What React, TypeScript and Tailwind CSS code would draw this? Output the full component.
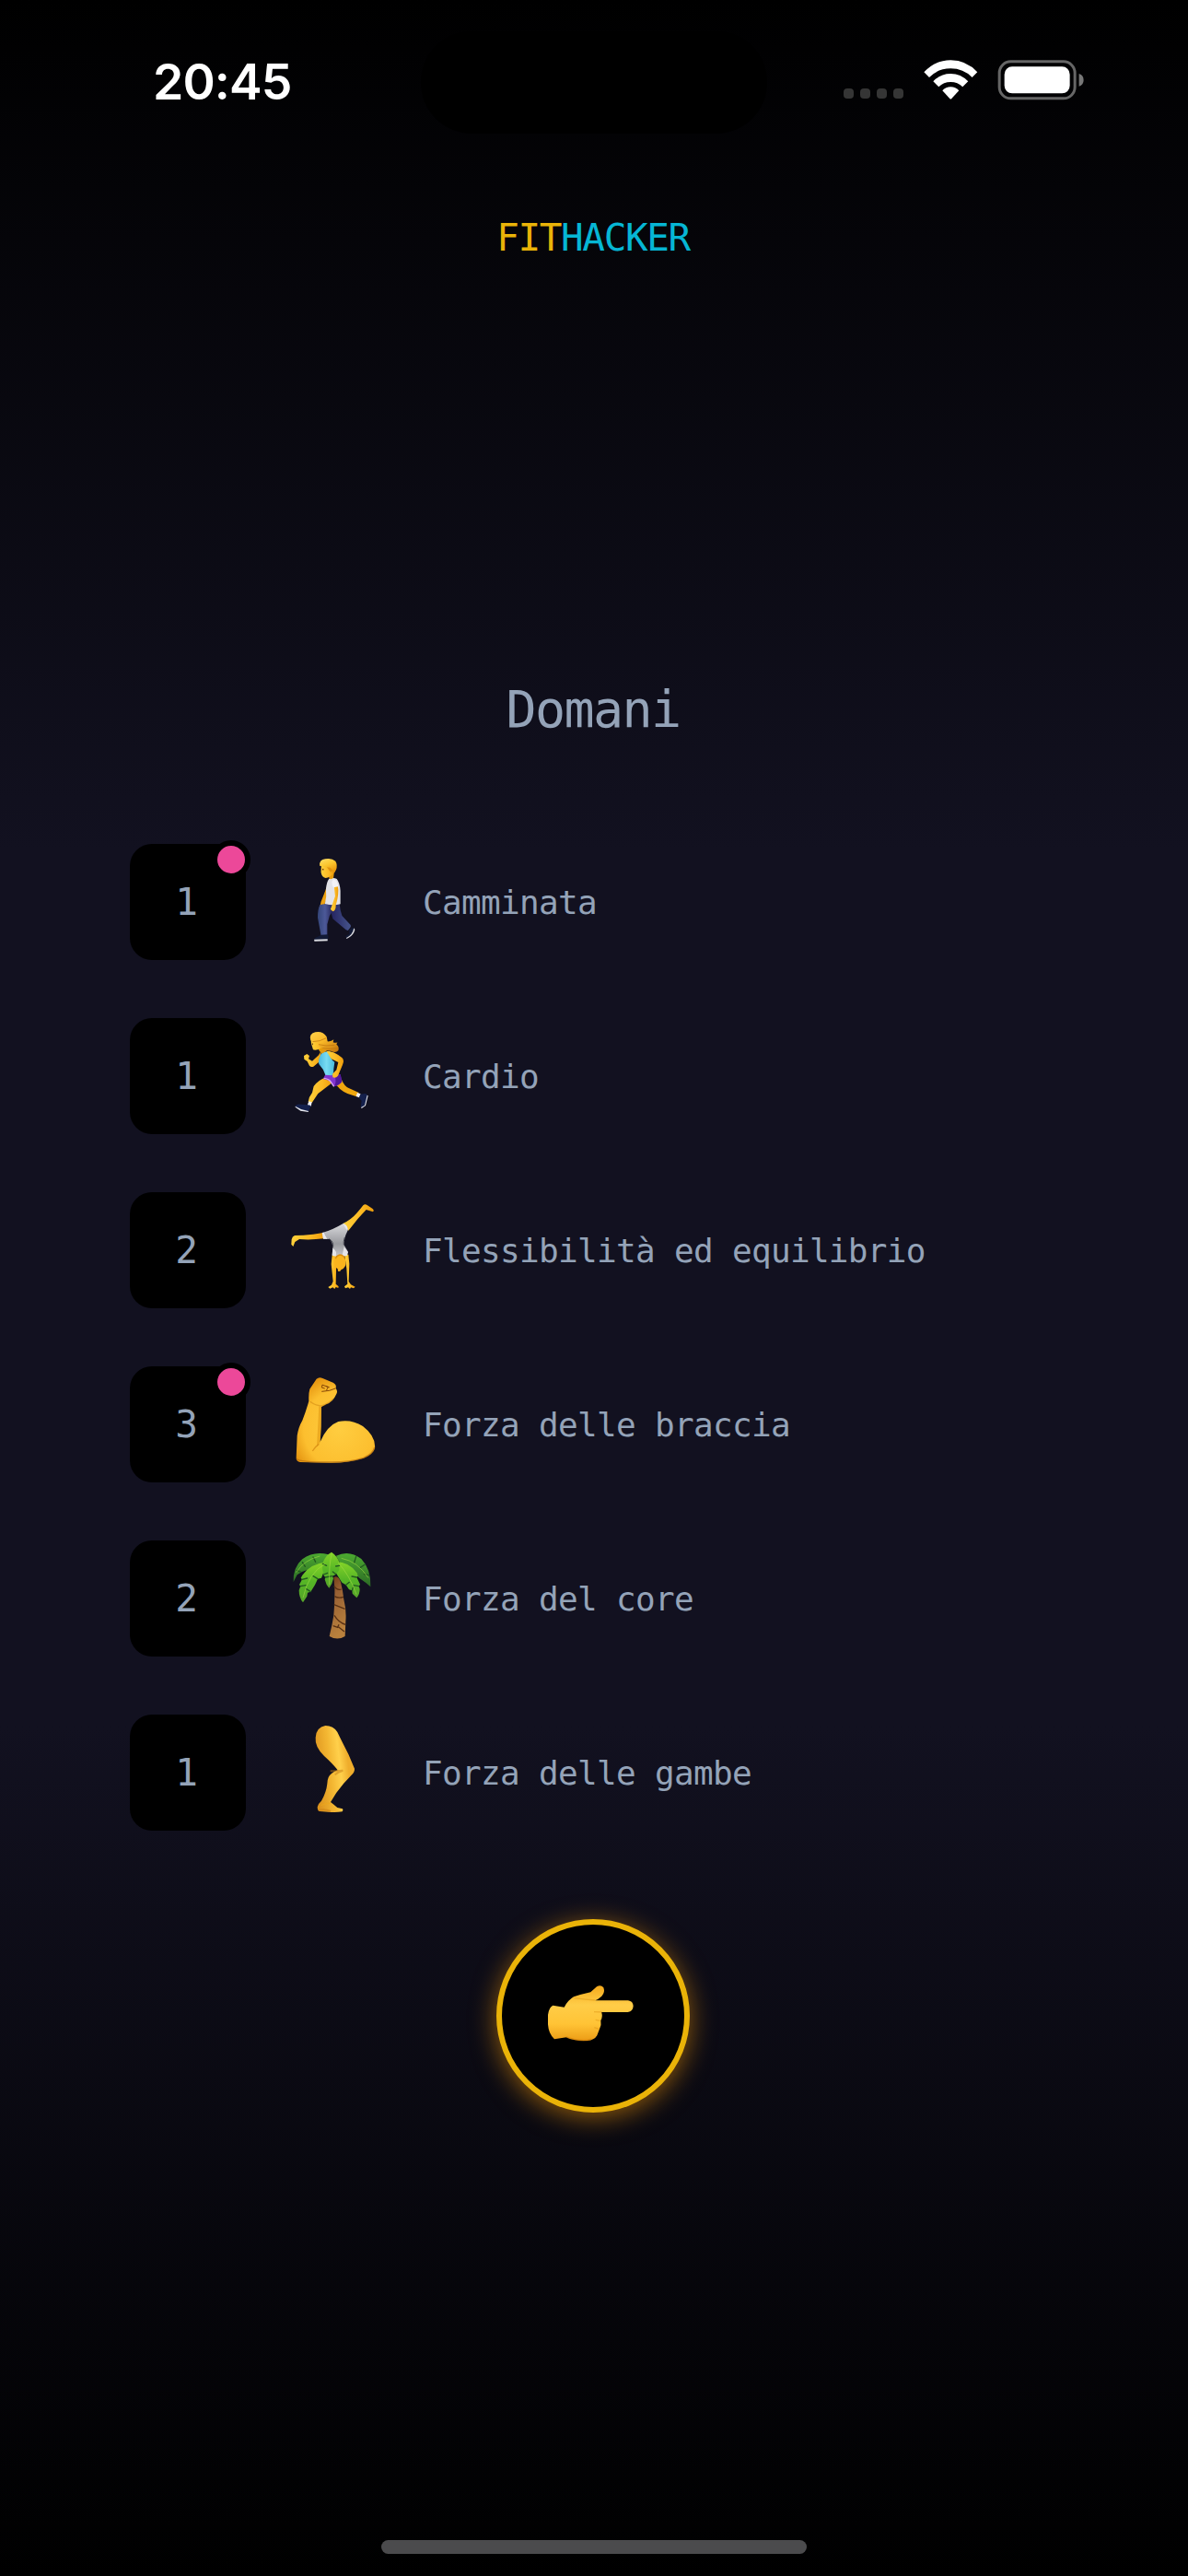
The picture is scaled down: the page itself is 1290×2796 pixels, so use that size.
import type { ReactNode } from "react";

function Emoji({ shift = 0, children }: { shift?: number; children: ReactNode }) {
  return (
    <svg viewBox={`0 ${shift} 390 390`} className="h-[130px] w-[130px] shrink-0">
      {children}
    </svg>
  );
}

function Walking() {
  return (
    <Emoji>
      <g transform="matrix(1.0714 0 0 1 -510 -42)">
        <path d="M630 186Q622 210 612 236Q607 250 611 262L618 258L630 226Z" fill="#eda110" />
        <path d="M629 242L668 240Q670 265 676 282L702 312Q704 318 700 322L694 330L688 328L648 292L640 262Z" fill="url(#denimBack)" />
        <path d="M609 246L644 240Q652 262 638 282L631 310L631 345L612 346Q604 300 602 288Q602 260 609 246Z" fill="url(#denim)" />
        <path d="M636 162Q650 156 660 162Q669 174 671 200L671 244Q648 250 624 243Q630 220 627 195Q629 172 636 162Z" fill="#e3e3e8" />
        <path d="M652 187L663 184Q668 210 657 248Q658 264 648 268L641 261L646 246L655 218Z" fill="url(#skin)" />
        <path d="M645 172Q647 162 655 164Q663 170 664 187L650 190Q645 184 645 172Z" fill="#f3f3f7" />
        <path d="M636 150L652 140L650 158Q643 165 637 161Z" fill="#e49a0a" />
        <path d="M613 118Q612 130 612 140Q614 156 626 159Q640 158 650 144L652 122Z" fill="url(#skin)" />
        <path d="M608 119Q606 100 625 97Q645 93 656 104Q663 116 658 132Q655 142 648 144L645 133L638 134L634 124Q622 125 611 120Z" fill="url(#hair)" />
        <path d="M630 124L640 125L648 134L642 140L637 134Z" fill="#e0930e" />
        <ellipse cx="618" cy="131" rx="2" ry="2.5" fill="#5b2e10" />
        <path d="M613 344L633 343Q636 352 632 360L592 361Q590 354 602 350Z" fill="#121a36" />
        <path d="M591 359L632 358L632 364L592 365Z" fill="#dcdde2" />
        <path d="M698 328L708 320Q714 324 710 337Q704 351 690 354L686 348L698 342Z" fill="#121a36" />
        <path d="M712 322L715 327Q711 347 690 357L689 354Q708 345 712 322Z" fill="#dcdde2" />
      </g>
    </Emoji>
  );
}

function Running() {
  return (
    <Emoji shift={9}>
      <path d="M145 124L138 136L117 155L105 148L108 138L100 132L90 138L91 149L101 156L108 170Q113 176 121 173L146 152Z" fill="url(#skin)" />
      <path d="M189 223Q204 250 232 261L262 271L269 258L236 243Q222 238 212 214Z" fill="#f0a80f" />
      <path d="M162 208Q137 217 122 237L117 258Q105 273 104 288L116 291L136 261L178 229Q186 218 178 209Z" fill="url(#skin)" />
      <path d="M160 198L190 201L209 199L214 223Q205 235 188 238L176 220L153 213Z" fill="#8134ce" />
      <path d="M190 202L209 199L214 222Q202 235 188 237Q198 225 190 202Z" fill="#51189a" />
      <path d="M155 211Q170 212 177 222L188 238" fill="none" stroke="#d9a5f2" strokeWidth="4" />
      <path d="M149 126L174 123Q173 148 190 158L187 181Q187 199 181 202L160 200Q154 181 139 165Q134 153 149 126Z" fill="url(#tank)" />
      <path d="M163 122Q188 122 214 144Q223 153 216 167L201 203Q194 212 184 208L183 197L196 184L202 159L179 148Z" fill="url(#skin)" />
      <path d="M134 98L158 100L164 122L148 131L139 120Z" fill="#e59a0b" />
      <path d="M113 85L114 99L117 108L120 118Q130 122 145 113L160 98L149 81Z" fill="url(#skin)" />
      <path d="M112 88Q105 67 127 61Q151 56 164 76L167 91Q179 92 187 85L185 94Q193 97 199 94L196 101Q206 108 202 121Q193 130 178 122Q161 122 150 113Q136 109 135 97Q122 96 112 88Z" fill="url(#blond)" />
      <path d="M118 92Q142 92 163 80M138 101Q160 108 190 103M151 113Q175 117 199 113" fill="none" stroke="#bd700b" strokeWidth="2.5" opacity=".8" />
      <ellipse cx="118" cy="100" rx="2" ry="3" fill="#684019" />
      <path d="M106 286L116 289L113 303L101 300Z" fill="#f1f1f6" />
      <path d="M83 296L104 298L113 300L105 319L80 313L62 303Q63 293 83 296Z" fill="#14204c" />
      <path d="M62 302L81 312L105 318L104 321L79 317L62 305Z" fill="#e6e8ef" />
      <path d="M264 258L275 262L270 274L260 270Z" fill="#f1f1f6" />
      <path d="M274 263L289 261Q300 263 297 276L286 302L275 306L278 284L270 276Z" fill="#14204c" />
      <path d="M296 266L299 268L291 300L278 309L276 306L288 299Z" fill="#e6e8ef" />
    </Emoji>
  );
}

function Cartwheel() {
  return (
    <Emoji shift={6}>
      <path d="M153 144Q120 151 88 152L60 153Q52 156 50 166L49 182L55 189L61 174L75 165Q112 168 155 163Z" fill="url(#skin)" />
      <path d="M217 114Q244 101 262 80Q275 66 283 55Q289 48 297 55L314 66Q320 72 315 76L293 69Q278 85 266 98L235 137Z" fill="url(#skin)" />
      <path d="M182 217L195 213L195 270L194 311L203 319L202 324L194 321L190 327L184 322L175 326L169 321L180 314L185 302L179 246Z" fill="url(#skin)" />
      <path d="M222 213L235 215L238 245L236 303L243 313L257 320L252 325L243 322L240 327L234 322L225 325L222 319L232 311L229 260Z" fill="url(#skin)" />
      <path d="M150 144Q181 136 218 114Q235 121 232 139Q220 161 221 184L233 205L230 217L211 224L182 216L184 193Q184 176 174 165L153 164Z" fill="url(#leotard)" />
      <path d="M172 164Q187 172 185 191M223 159Q218 174 220 184" fill="none" stroke="#42434d" strokeWidth="3" />
      <path d="M149 144L155 143Q159 154 166 164L153 164ZM218 114Q234 119 233 138Q224 130 218 114Z" fill="#e8e8ec" />
      <path d="M184 194Q199 203 194 221L182 218ZM221 190L234 207L231 218L214 222Z" fill="#e5e5e9" />
      <path d="M195 222Q207 211 221 221Q229 238 225 252Q219 263 211 265Q209 272 201 269L200 262Q188 256 190 237Z" fill="#f9b41d" />
      <path d="M193 228Q199 217 207 216Q217 216 223 227" fill="none" stroke="#dd9010" strokeWidth="4" />
    </Emoji>
  );
}

function Biceps() {
  return (
    <Emoji shift={3}>
      <path d="M109 83L131 50Q140 42 151 48L185 62Q197 68 194 80Q201 90 196 99Q185 125 162 133L147 141L146 205L143 255Q166 202 202 189Q244 180 282 204Q325 237 321 276Q315 296 284 308Q231 324 173 323L78 321Q65 320 65 307L68 235Q72 207 85 185Q97 155 106 122Q105 96 109 83Z" fill="url(#arm)" />
      <path d="M147 142L146 210L143 256L132 270Q136 200 139 139Z" fill="#dc900c" opacity=".5" />
      <path d="M139 262Q127 270 118 285" fill="none" stroke="#d1840f" strokeWidth="4" opacity=".7" />
      <path d="M110 124Q126 137 147 138Q169 132 186 115" fill="none" stroke="#c57c0e" strokeWidth="4" opacity=".45" />
      <path d="M193 81Q176 90 149 91M150 70L148 78L157 81M163 74L169 77L164 86M151 70L172 77" fill="none" stroke="#854607" strokeWidth="3" strokeLinecap="round" strokeLinejoin="round" />
      <path d="M66 310Q73 321 174 321Q237 322 284 307Q315 295 320 273" fill="none" stroke="#b36a0b" strokeWidth="4" opacity=".65" />
    </Emoji>
  );
}

function PalmTree() {
  return (
    <Emoji>
      <path d="M187 126Q202 118 210 142Q217 171 220 198Q229 233 226 269L224 318Q199 333 173 318Q182 283 187 250Q191 206 190 160Z" fill="url(#trunk)" />
      <path d="M188 155Q199 170 212 165M190 188Q202 196 219 190M188 215Q205 222 224 229M189 250Q204 274 226 280M185 284L200 289L204 280M203 288L222 303" fill="none" stroke="#583014" strokeWidth="4" />
      <path d="M170 52Q123 39 85 67Q54 94 56 141L68 118L84 108L120 95L158 87Z" fill="url(#leafDark)" />
      <path d="M195 56Q238 36 277 66Q310 101 307 157L292 144L270 128L250 108L214 90Z" fill="url(#leafDark)" />
      <path d="M165 76Q111 82 85 119L80 128L84 133L75 150L79 155L74 168Q74 193 87 208L100 188L102 176L112 173L126 151L135 131L147 128L160 95Z" fill="url(#leaf)" />
      <path d="M194 75Q238 76 263 112L266 122L262 126L273 149L269 155L272 164Q272 181 262 193L248 179L247 169L237 166L227 151L214 143L200 121L190 104Z" fill="url(#leaf)" />
      <path d="M180 44Q160 55 152 77L150 96L154 119L160 126L158 133Q162 151 172 161Q183 148 186 130L183 122L195 116L205 102L206 78Q198 56 180 44Z" fill="url(#leaf)" />
      <path d="M84 133L101 129M79 155L96 152M135 131L120 122M112 173L98 164M262 126L246 123M269 155L252 152M227 151L238 142M247 169L250 159M151 82L164 88M154 117L167 112M160 126L183 122M206 88L194 90M195 116L184 108M85 77L94 91M120 60L128 76M67 104L79 108M260 58L254 78M289 84L274 94M302 119L286 116" fill="none" stroke="#225a20" strokeWidth="4" strokeLinecap="round" />
      <path d="M181 49Q171 83 173 150M159 82Q105 111 87 193M201 78Q238 117 261 182M142 57Q91 69 65 110M212 64Q265 74 300 128" fill="none" stroke="#a7dc46" strokeWidth="3" opacity=".55" />
    </Emoji>
  );
}

function Leg() {
  return (
    <Emoji shift={-3}>
      <path d="M128 78Q130 44 160 39Q186 39 199 60Q212 87 235 132L255 179Q256 190 244 201L219 228Q193 258 177 288Q190 298 199 306L216 310Q219 315 215 319Q193 323 169 320L141 318Q134 316 134 304Q137 292 147 284Q163 257 166 228Q166 205 180 195Q189 188 200 184Q184 163 156 138Q125 108 128 78Z" fill="url(#leg)" />
      <path d="M176 187Q190 187 217 185Q200 190 191 199M137 315Q157 309 177 318" fill="none" stroke="#c67c13" strokeWidth="6" opacity=".5" />
      <path d="M145 299Q158 293 176 291" fill="none" stroke="#eca61a" strokeWidth="4" opacity=".6" />
    </Emoji>
  );
}

function PointingHand() {
  return (
    <svg viewBox="250 300 300 210" className="relative -left-[2px] h-[70px] w-[100px]">
      <path d="M275 380L312 386Q324 363 343 352Q370 343 398 337L418 319Q431 311 440 322Q446 338 434 350Q421 361 413 364L520 364Q536 366 537 382Q536 400 519 402L433 402Q439 415 431 429Q434 443 427 457L419 478Q410 494 386 495Q345 497 319 484L280 490Q261 473 259 442L259 411Q262 386 275 380Z" fill="url(#hand)" />
      <path d="M344 356Q382 362 413 363M436 402L409 401M429 430L414 427M426 457L410 452" fill="none" stroke="#d68b0d" strokeWidth="4" opacity=".4" />
      <path d="M318 483Q368 500 401 490" fill="none" stroke="#c77605" strokeWidth="5" opacity=".45" />
    </svg>
  );
}

function Gradients() {
  return (
    <svg className="absolute h-0 w-0" aria-hidden="true">
      <defs>
        <linearGradient id="skin" x1="0" y1="0" x2="1" y2="0"><stop stopColor="#ffd13b" /><stop offset=".6" stopColor="#fbb923" /><stop offset="1" stopColor="#ee9d0b" /></linearGradient>
        <linearGradient id="hair" x1="0" y1="0" x2=".5" y2="1"><stop stopColor="#ffe06a" /><stop offset=".5" stopColor="#fbc72f" /><stop offset="1" stopColor="#e9970c" /></linearGradient>
        <linearGradient id="blond" x1="0" y1="0" x2="1" y2="1"><stop stopColor="#ffd24a" /><stop offset=".45" stopColor="#f9b828" /><stop offset="1" stopColor="#c0700a" /></linearGradient>
        <linearGradient id="denim" x1="0" x2="1"><stop stopColor="#344579" /><stop offset=".5" stopColor="#4c5998" /><stop offset="1" stopColor="#29285e" /></linearGradient>
        <linearGradient id="denimBack" x1="0" x2="1"><stop stopColor="#1d1957" /><stop offset="1" stopColor="#46548b" /></linearGradient>
        <linearGradient id="tank" x1="0" x2="1"><stop stopColor="#4bb9df" /><stop offset=".5" stopColor="#78dbf2" /><stop offset="1" stopColor="#49bada" /></linearGradient>
        <linearGradient id="leotard" x1="0" y1="0" x2="0" y2="1"><stop stopColor="#dadadd" /><stop offset=".6" stopColor="#98999e" /><stop offset="1" stopColor="#c9c9cd" /></linearGradient>
        <radialGradient id="arm" cx=".55" cy=".6" r=".65"><stop stopColor="#ffcd40" /><stop offset=".7" stopColor="#fcbf2f" /><stop offset="1" stopColor="#e4930f" /></radialGradient>
        <linearGradient id="trunk" x1="0" y1="0" x2=".3" y2="1"><stop stopColor="#693610" /><stop offset=".35" stopColor="#986034" /><stop offset="1" stopColor="#b9813d" /></linearGradient>
        <linearGradient id="leaf" x1="0" y1="0" x2="0" y2="1"><stop stopColor="#85d428" /><stop offset=".5" stopColor="#55b526" /><stop offset="1" stopColor="#56a32a" /></linearGradient>
        <linearGradient id="leafDark" x1="0" y1="0" x2="0" y2="1"><stop stopColor="#4caa30" /><stop offset="1" stopColor="#2c6a25" /></linearGradient>
        <linearGradient id="leg" x1="0" y1=".5" x2=".8" y2=".3"><stop stopColor="#dd941e" /><stop offset=".45" stopColor="#f3b632" /><stop offset=".75" stopColor="#ffd04b" /><stop offset="1" stopColor="#efad2c" /></linearGradient>
        <linearGradient id="hand" x1="0" y1="0" x2="0" y2="1"><stop stopColor="#f5aa1c" /><stop offset=".35" stopColor="#ffcd48" /><stop offset=".7" stopColor="#ffc335" /><stop offset="1" stopColor="#ec9c16" /></linearGradient>
      </defs>
    </svg>
  );
}

const activities = [
  { count: 1, label: "Camminata", icon: <Walking />, marked: true },
  { count: 1, label: "Cardio", icon: <Running />, marked: false },
  { count: 2, label: "Flessibilità ed equilibrio", icon: <Cartwheel />, marked: false },
  { count: 3, label: "Forza delle braccia", icon: <Biceps />, marked: true },
  { count: 2, label: "Forza del core", icon: <PalmTree />, marked: false },
  { count: 1, label: "Forza delle gambe", icon: <Leg />, marked: false },
];

function StatusBar() {
  return (
    <header className="flex h-[177px] w-full shrink-0 items-start">
      <div className="w-[457px] pt-[56px] pl-[166px] font-['Inter',sans-serif] text-[53.5px] leading-[66px] font-semibold tracking-[-0.9px] text-white">20:45</div>
      <div className="mt-[34px] h-[111px] w-[376px] rounded-full bg-black" />
      <div className="flex items-start pt-[65px] pl-[83px]">
        <div className="mt-[31px] flex gap-[7px]">
          {[0, 1, 2, 3].map((i) => <span key={i} className="h-[11px] w-[11px] rounded-[4px] bg-[#353535]" />)}
        </div>
        <svg viewBox="370 74 176 129" className="ml-[22px] h-[43px] w-[58.6px]" fill="#fff">
          <path d="M371 114Q407 75 458 75Q509 75 545 114L528 131Q499 102 458 102Q417 102 388 131Z" />
          <path d="M401 144Q425 119 458 119Q491 119 515 144L497 162Q481 146 458 146Q435 146 419 162Z" />
          <path d="M431 174Q442 162 458 162Q474 162 485 174L461 200Q458 203 455 200Z" />
        </svg>
        <svg viewBox="610 74 284 131" className="ml-[21px] h-[43.67px] w-[94.67px]">
          <rect x="616.5" y="79.5" width="246" height="120" rx="37" fill="none" stroke="#666" strokeWidth="9" />
          <rect x="633" y="96" width="213" height="87" rx="25" fill="#fff" />
          <path d="M876 119Q891 124 891 140Q891 156 876 160Z" fill="#777" />
        </svg>
      </div>
    </header>
  );
}

export default function App() {
  return (
    <main className="relative flex h-[2796px] w-[1290px] flex-col overflow-hidden bg-[linear-gradient(180deg,#000_0%,#121120_33%,#121120_67%,#000_100%)] font-['DejaVu_Sans_Mono',monospace] text-[#94a3b8]">
      <Gradients />
      <StatusBar />
      <h1 className="mt-[51px] flex h-[60px] justify-center pr-[2px] text-[41px] leading-[60px] tracking-[-1.4px]">
        <span className="text-[#eab308]">FIT</span>
        <span className="text-[#06b6d4]">HACKER</span>
      </h1>
      <h2 className="mt-[440px] h-[84px] pr-[2px] text-center text-[55px] leading-[84px] tracking-[-1.6px]">Domani</h2>
      <ul className="mt-[104px] ml-[141px] flex flex-col gap-[63px]">
        {activities.map((activity) => (
          <li key={activity.label} className="flex h-[126px] items-center">
            <div className="relative flex h-[126px] w-[126px] items-center justify-center rounded-[24px] bg-black pt-[2px] pr-[3px] text-[41px]">
              {activity.count}
              {activity.marked && <span className="absolute -top-1 -right-[5px] h-[42px] w-[42px] rounded-full border-6 border-black bg-[#ec4899]" />}
            </div>
            <div className="ml-[33px]">{activity.icon}</div>
            <span className="ml-[29px] pt-[2px] text-[36px] tracking-[-0.68px] whitespace-nowrap">{activity.label}</span>
          </li>
        ))}
      </ul>
      <button className="mt-[96px] mr-[2px] flex h-[210px] w-[210px] items-center justify-center self-center rounded-full border-6 border-[#eab308] bg-black pb-[6px] shadow-[0_5px_28px_0_rgba(234,145,8,0.6)]" aria-label="Avanti">
        <PointingHand />
      </button>
      <div className="mt-auto mb-[24px] h-[15px] w-[462px] self-center rounded-full bg-[#4b4b4d]" />
    </main>
  );
}
